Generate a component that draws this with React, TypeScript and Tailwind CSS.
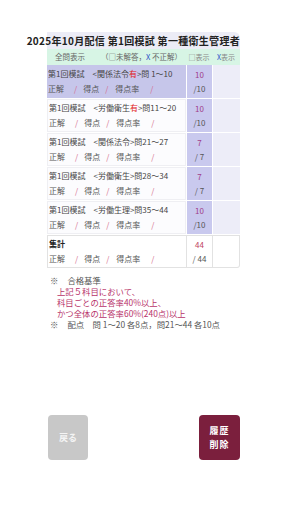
import React from 'react';

type Row = {
  title: string;
  range: string;
  hit: boolean;
  score: string;
  total: string;
};

const rows: Row[] = [
  { title: '関係法令', range: '問 1～10', hit: true, score: '10', total: '/10' },
  { title: '労働衛生', range: '問11～20', hit: true, score: '10', total: '/10' },
  { title: '関係法令', range: '問21～27', hit: false, score: '7', total: '/ 7' },
  { title: '労働衛生', range: '問28～34', hit: false, score: '7', total: '/ 7' },
  { title: '労働生理', range: '問35～44', hit: false, score: '10', total: '/10' },
];

const ScoreLine = () => (
  <div className="flex items-center text-[8px] leading-none text-[#555]">
    <span>正解</span>
    <span className="ml-[10px] text-[#d46a8a]">/</span>
    <span className="ml-[6px]">得点</span>
    <span className="ml-[6px] text-[#d46a8a]">/</span>
    <span className="ml-[7px]">得点率</span>
    <span className="ml-[11px] text-[#d46a8a]">/</span>
  </div>
);

export default function App() {
  return (
    <div
      className="w-[288px] h-[512px] bg-white flex flex-col overflow-hidden"
      style={{ fontFamily: '"Noto Sans CJK JP", "Noto Sans", sans-serif' }}
    >
      <div className="ml-[47px] mt-[32px] w-[193px] flex flex-col">
        {/* Title */}
        <div className="h-[17px] bg-[#ececf6] rounded-tr-[6px] flex items-center justify-end whitespace-nowrap text-[10px] font-bold text-[#222] tracking-[0.3px]">
          2025年10月配信 第1回模試 第一種衛生管理者
        </div>

        {/* Filter bar */}
        <div className="h-[16px] bg-[#d7f5e5] flex items-center text-[7.5px] text-[#666] whitespace-nowrap">
          <div className="w-[139px] flex items-center">
            <span className="ml-[8px]">全問表示</span>
            <span className="ml-[16px]">（□未解答，<span className="text-[#2f55c8]">X</span> 不正解）</span>
          </div>
          <div className="w-[26px] flex justify-center text-[7px] text-[#888]">□表示</div>
          <div className="flex-1 flex justify-center text-[7px] text-[#888]">
            <span className="text-[#2f55c8]">X</span>表示
          </div>
        </div>

        {/* Subject rows */}
        <div className="flex flex-col gap-px bg-white">
          {rows.map((r, i) => (
            <div key={i} className="h-[33px] flex gap-px">
              <div
                className={
                  'w-[139px] flex flex-col justify-center gap-[7px] pl-[1px] ' +
                  (i === 0 ? 'bg-[#c6c6ea]' : 'bg-[#fcfcfe] border border-[#efeff3]')
                }
              >
                <div className="text-[8px] leading-none text-[#444] whitespace-nowrap">
                  第1回模試　&lt;{r.title}
                  {r.hit && <span className="text-[#e02020]">有</span>}&gt;{r.range}
                </div>
                <ScoreLine />
              </div>
              <div className="w-[25px] bg-[#c9c9ee] flex flex-col items-center justify-center gap-[6px] text-[8px] leading-none">
                <span className="text-[#a0408a]">{r.score}</span>
                <span className="text-[#555]">{r.total}</span>
              </div>
              <div className="flex-1 bg-[#ededf8]" />
            </div>
          ))}

          {/* Total */}
          <div className="h-[33px] flex">
            <div className="w-[140px] flex flex-col justify-center gap-[7px] pl-[1px] border border-[#e2e2e2] bg-white">
              <div className="text-[8px] leading-none font-bold text-[#222]">集計</div>
              <ScoreLine />
            </div>
            <div className="w-[26px] border-y border-r border-[#e2e2e2] bg-white flex flex-col items-center justify-center gap-[6px] text-[8px] leading-none">
              <span className="text-[#c04060]">44</span>
              <span className="text-[#555]">/ 44</span>
            </div>
            <div className="flex-1 border-y border-r border-[#e2e2e2] bg-white rounded-br-[3px]" />
          </div>
        </div>
      </div>

      {/* Notes */}
      <div className="ml-[50px] mt-[7px] flex flex-col text-[8.4px] leading-[11px] whitespace-nowrap">
        <div className="text-[#555]">
          ※<span className="ml-[9px]">合格基準</span>
        </div>
        <div className="ml-[7px] text-[#b8336a]">上記５科目において、</div>
        <div className="ml-[7px] text-[#b8336a]">科目ごとの正答率40%以上、</div>
        <div className="ml-[7px] text-[#b8336a]">かつ全体の正答率60%(240点)以上</div>
        <div className="text-[#555]">
          ※<span className="ml-[9px]">配点　問 1～20 各8点，問21～44 各10点</span>
        </div>
      </div>

      {/* Buttons */}
      <div className="mt-auto mb-[52px] mx-[48px] flex justify-between">
        <button className="w-[40px] h-[45px] rounded-[4px] bg-[#c8c8c8] text-[#f4f4f4] text-[9px] font-bold flex items-center justify-center">
          戻る
        </button>
        <button className="w-[41px] h-[45px] rounded-[4px] bg-[#7b1f3d] text-white text-[9px] font-bold flex flex-col items-center justify-center leading-[14px] tracking-[1px]">
          <span>履歴</span>
          <span>削除</span>
        </button>
      </div>
    </div>
  );
}
